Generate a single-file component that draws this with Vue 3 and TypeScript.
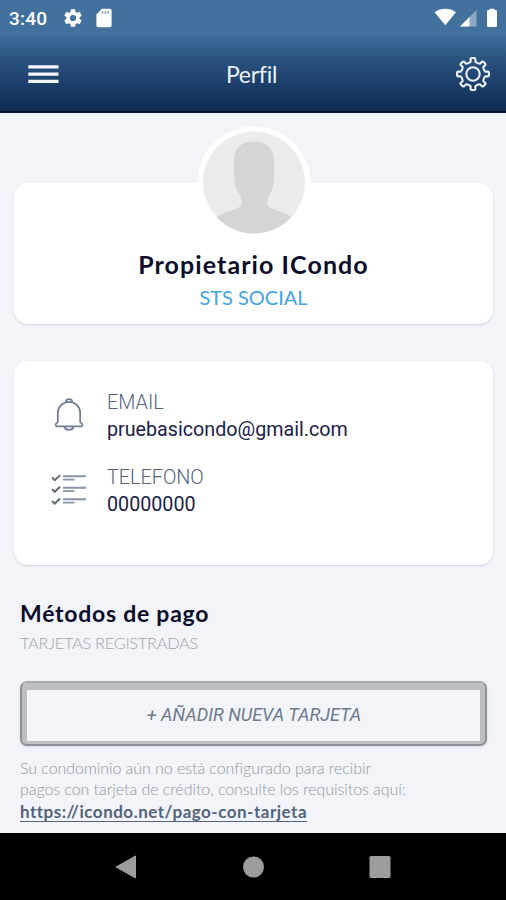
<script setup lang="ts">
interface ContactRow {
  icon: 'bell' | 'list'
  label: string
  value: string
}

const rows: ContactRow[] = [
  { icon: 'bell', label: 'EMAIL', value: 'pruebasicondo@gmail.com' },
  { icon: 'list', label: 'TELEFONO', value: '00000000' },
]

// Outline of an eight-toothed cog centred on the origin.
function cogPath(teeth: number, outer: number, inner: number): string {
  const point = (radius: number, degrees: number): string => {
    const angle = ((degrees - 90) * Math.PI) / 180
    return `${(radius * Math.cos(angle)).toFixed(2)} ${(radius * Math.sin(angle)).toFixed(2)}`
  }
  const step = 360 / teeth
  let path = ''
  for (let i = 0; i < teeth; i++) {
    const a = i * step
    path += `${i ? 'L' : 'M'}${point(inner, a - 11)} L${point(outer - 0.8, a - 9)} Q${point(outer, a - 8)} ${point(outer, a - 5)} L${point(outer, a + 5)} Q${point(outer, a + 8)} ${point(outer - 0.8, a + 9)} L${point(inner, a + 11)} Q${point(inner - 1.2, a + step / 2)} ${point(inner, a + step - 11)} `
  }
  return path + 'Z'
}

const cog = cogPath(8, 16, 12.4)
</script>

<template>
  <div class="screen">
    <header class="top">
      <div class="status">
        <span class="clock">3:40</span>
        <svg class="status-gear" viewBox="0 0 24 24"><path fill="#fff" d="M19.14 12.94c.04-.3.06-.61.06-.94 0-.32-.02-.64-.07-.94l2.03-1.58c.18-.14.23-.41.12-.61l-1.92-3.32c-.12-.22-.37-.29-.59-.22l-2.39.96c-.5-.38-1.03-.7-1.62-.94l-.36-2.54c-.04-.24-.24-.41-.48-.41h-3.84c-.24 0-.43.17-.47.41l-.36 2.54c-.59.24-1.13.57-1.62.94l-2.39-.96c-.22-.08-.47 0-.59.22L2.74 8.87c-.12.21-.08.47.12.61l2.03 1.58c-.05.3-.09.63-.09.94s.02.64.07.94l-2.03 1.58c-.18.14-.23.41-.12.61l1.92 3.32c.12.22.37.29.59.22l2.39-.96c.5.38 1.03.7 1.62.94l.36 2.54c.05.24.24.41.48.41h3.84c.24 0 .44-.17.47-.41l.36-2.54c.59-.24 1.13-.56 1.62-.94l2.39.96c.22.08.47 0 .59-.22l1.92-3.32c.12-.22.07-.47-.12-.61l-2.01-1.58zM12 15.4a3.4 3.4 0 1 1 0-6.8 3.4 3.4 0 0 1 0 6.8z" /></svg>
        <svg class="sd" viewBox="0 0 16 20"><path fill="#fff" d="M6 .8h8a1.6 1.6 0 0 1 1.6 1.6v15.2a1.6 1.6 0 0 1-1.6 1.6H2a1.6 1.6 0 0 1-1.6-1.6V6.5z" /><path stroke="#7f9fbd" stroke-width="1.5" d="M6.5 3.2v2.600M9.3 3.2v2.600M12.1 3.2v2.600" /></svg>
        <svg class="signals" viewBox="0 0 66 20">
          <path fill="#fff" d="M-.5 4.200C6-.4 14.600-.4 21 4.200L10.300 17.300z" />
          <path fill="#8aa9c4" d="M41.500 2v16.500H25z" />
          <path fill="#fff" d="M34.500 9v9.500H25z" />
          <path fill="#fff" d="M54.500 2V.7h5V2h1.300a1.200 1.200 0 0 1 1.200 1.200v14.600a1.200 1.200 0 0 1-1.200 1.200h-7.600a1.200 1.200 0 0 1-1.200-1.200V3.200A1.200 1.200 0 0 1 53.200 2z" />
        </svg>
      </div>
      <nav class="bar">
        <svg class="menu" viewBox="0 0 31 20"><path stroke="#f4f8fc" stroke-width="3.200" d="M.3 2.800h30.200M.3 10.100h30.200M.3 17.300h30.200" /></svg>
        <h1 class="title">Perfil</h1>
        <svg class="cog" viewBox="-18 -18 36 36"><g fill="none" stroke="#e9f0f7" stroke-width="2.100" stroke-linejoin="round"><path :d="cog" /><circle r="6.700" /></g></svg>
      </nav>
    </header>

    <main class="content">
      <section class="card profile">
        <svg class="avatar" viewBox="0 0 114 114">
          <defs><clipPath id="face"><circle cx="57" cy="56.500" r="51" /></clipPath></defs>
          <circle cx="57" cy="57" r="56.500" fill="#fff" />
          <g clip-path="url(#face)">
            <path fill="#ebebeb" d="M0 0h114v114H0z" />
            <path fill="#d5d5d5" d="M57 15.500c-13 0-20 7-20 19 0 9-.5 19 1.500 26 1.500 5 5.500 9 6 14 .3 4 0 5.500-2 6.500-8 4-18 6-23.500 10.500V114h76V91.500c-5.500-4.500-15-6-22.500-10.500-2-1.300-2.300-3-2-6.500.5-5 4.500-9 5.500-14 1.500-7 1-17 1-26 0-12-7-19-20-19z" />
          </g>
        </svg>
        <h2 class="name">Propietario ICondo</h2>
        <p class="community">STS SOCIAL</p>
      </section>

      <section class="card contact">
        <div v-for="row in rows" :key="row.label" class="row">
          <svg v-if="row.icon === 'bell'" class="row-icon" viewBox="0 0 36 36">
            <g fill="none" stroke="#727f94" stroke-width="1.800" stroke-linejoin="round">
              <path d="M6.800 25.200V16a11.200 11.200 0 0 1 22.400 0v9.200l1.700 1.500a1.500 1.500 0 0 1-.8 2.600H5.900a1.500 1.500 0 0 1-.8-2.600z" />
              <path d="M14.800 4.800a3.200 2.600 0 0 1 6.400 0M13.500 29.700a4.600 4 0 0 0 9 0" />
            </g>
          </svg>
          <svg v-else class="row-icon" viewBox="0 0 36 36">
            <g fill="none">
              <path stroke="#616b79" stroke-width="2" d="M1 5.500l2.800 2.600 5.200-5M1 17.200l2.800 2.600 5.200-5M1 28.900l2.800 2.600 5.200-5" />
              <path stroke="#8792a3" stroke-width="1.900" d="M12 4.200h23M12 15.800h23M12 27.300h23" />
              <path stroke="#8792a3" stroke-width="1.700" d="M12 7.600h11.500M12 19.200h11.500M12 30.700h11.500" />
            </g>
          </svg>
          <div class="row-text">
            <span class="label">{{ row.label }}</span>
            <span class="value">{{ row.value }}</span>
          </div>
        </div>
      </section>

      <section class="payment">
        <h2 class="heading">Métodos de pago</h2>
        <p class="sub">TARJETAS REGISTRADAS</p>
        <button class="add" type="button">+ AÑADIR NUEVA TARJETA</button>
        <p class="note">Su condominio aún no está configurado para recibir<br />pagos con tarjeta de crédito, consulte los requisitos aquí:</p>
        <a class="link">https://icondo.net/pago-con-tarjeta</a>
      </section>
    </main>

    <footer class="android">
      <svg viewBox="0 0 22 24"><path fill="#9d9d9d" d="M20.500 1v22L1 12z" stroke="#9d9d9d" stroke-linejoin="round" /></svg>
      <svg viewBox="0 0 22 24"><circle cx="11.500" cy="12" r="10.500" fill="#9d9d9d" /></svg>
      <svg viewBox="0 0 22 24"><rect x=".5" y="1" width="21" height="22" rx="1.500" fill="#9d9d9d" /></svg>
    </footer>
  </div>
</template>

<style>
body {
  margin: 0;
}
</style>

<style scoped>
* {
  box-sizing: border-box;
}
h1, h2, p {
  margin: 0;
  font-weight: 400;
}
svg {
  display: block;
  flex: none;
}
.screen {
  width: 506px;
  height: 900px;
  display: flex;
  flex-direction: column;
  overflow: hidden;
  background: #f2f4f9;
  font-family: Lato, "Liberation Sans", sans-serif;
  white-space: nowrap;
}
.top {
  height: 113px;
  flex: none;
  background: linear-gradient(#41719c 0, #41719c 32px, #34648f 45px, #28507c 62px, #1c3f6a 84px, #102c54 110px);
  border-bottom: 2px solid #07142e;
}
.status {
  height: 35px;
  display: flex;
  align-items: center;
  padding: 0 5px 0 9px;
}
.clock {
  width: 53px;
  font: 500 19px/35px Roboto, sans-serif;
  letter-spacing: 0.200px;
  padding-top: 1px;
  color: #fff;
}
.status-gear {
  width: 22px;
  height: 22px;
}
.sd {
  width: 16px;
  height: 20px;
  margin-left: 12px;
}
.signals {
  width: 66px;
  height: 20px;
  margin-left: auto;
  overflow: visible;
}
.bar {
  height: 76px;
  display: grid;
  grid-template-columns: 1fr auto 1fr;
  align-items: center;
  padding: 2px 15px 0 28px;
}
.menu {
  width: 31px;
  height: 20px;
}
.title {
  font-size: 23px;
  line-height: 30px;
  letter-spacing: -0.250px;
  margin-right: 16px;
  color: #edf3f9;
}
.cog {
  width: 36px;
  height: 36px;
  justify-self: end;
}
.content {
  flex: 1;
  padding: 70px 13px 0 14px;
}
.card {
  background: #fff;
  border-radius: 14px;
  box-shadow: 0 1px 2px #ccd0d8;
}
.profile {
  height: 141px;
  display: flex;
  flex-direction: column;
  align-items: center;
}
.avatar {
  width: 114px;
  height: 114px;
  margin-top: -57px;
}
.name {
  margin-top: 8px;
  font-size: 25px;
  line-height: 33px;
  font-weight: 700;
  letter-spacing: 1.080px;
  color: #0b0d2b;
}
.community {
  font-size: 20px;
  line-height: 32px;
  color: #43a4df;
}
.contact {
  height: 204px;
  margin-top: 37px;
  padding: 30px 37px;
}
.row {
  height: 75px;
  display: flex;
}
.row-icon {
  width: 36px;
  height: 36px;
  margin-top: 6px;
}
.row-text {
  display: flex;
  flex-direction: column;
  margin-left: 20px;
  font-family: Roboto, sans-serif;
}
.label {
  font-size: 19.800px;
  line-height: 24px;
  font-weight: 300;
  color: #56637b;
}
.value {
  font-size: 19.700px;
  line-height: 29px;
  color: #1b2147;
}
.payment {
  display: flex;
  flex-direction: column;
  align-items: flex-start;
  padding: 31px 5px 0 6px;
}
.heading {
  font-size: 23px;
  line-height: 34px;
  font-weight: 700;
  letter-spacing: 0.750px;
  color: #0b0d2b;
}
.sub {
  font-size: 16.500px;
  line-height: 26px;
  font-weight: 300;
  letter-spacing: -0.350px;
  color: #a1a5ad;
}
.add {
  width: 467px;
  height: 65px;
  margin-top: 25px;
  padding: 4px 2px 2px 3px;
  border: 2px solid #8b919b;
  border-top-color: #a8acb2;
  border-radius: 7px;
  background: #f2f4f9;
  box-shadow: inset 0 2px 0 5px #bcbfc2, 0 1px 3px #d5d9df;
  font: italic 400 18.100px/56px Roboto, sans-serif;
  color: #6d7a8d;
}
.note {
  margin-top: 11px;
  font-size: 16px;
  line-height: 21px;
  font-weight: 300;
  letter-spacing: -0.060px;
  color: #92969f;
}
.link {
  margin-top: 1px;
  font-size: 17px;
  line-height: 23px;
  font-weight: 700;
  letter-spacing: 0.500px;
  color: #52637d;
  text-decoration: underline;
  text-decoration-thickness: 1px;
  text-underline-offset: 3px;
}
.android {
  height: 67px;
  flex: none;
  display: flex;
  justify-content: space-between;
  align-items: center;
  padding: 0 115px;
  background: #000;
}
.android svg {
  width: 22px;
  height: 24px;
}
</style>
